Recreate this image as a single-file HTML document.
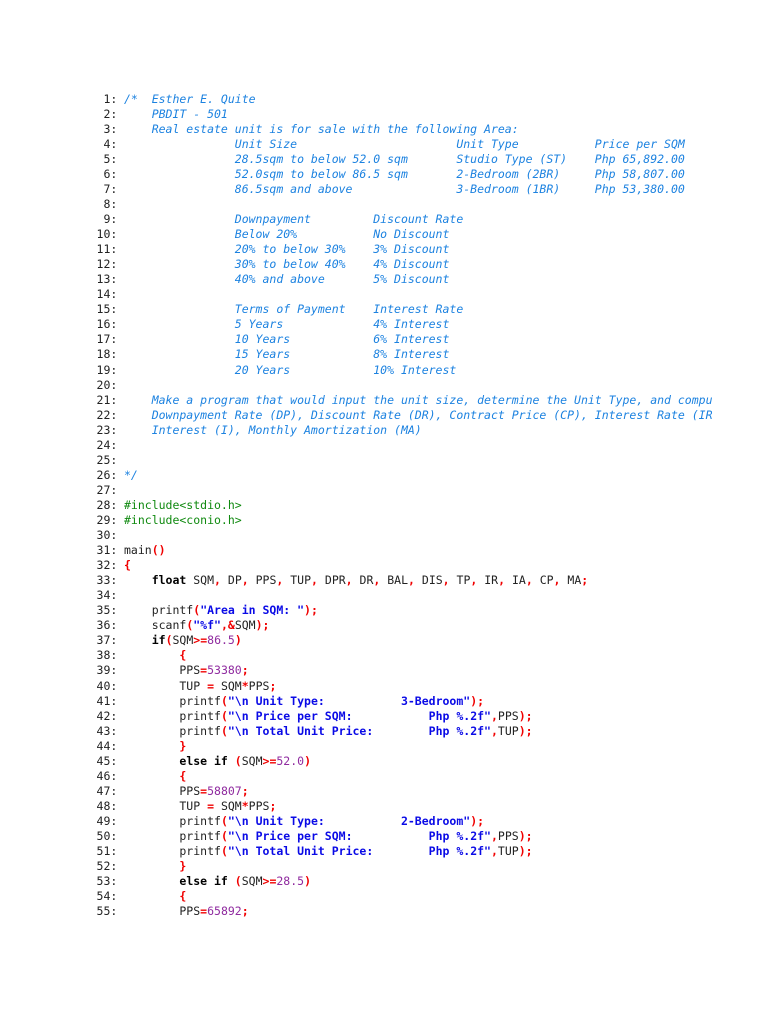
<!DOCTYPE html>
<html>
<head>
<meta charset="utf-8">
<style>
html,body{margin:0;padding:0;background:#fff;width:768px;height:1024px;overflow:hidden}
pre{margin:0;position:absolute;font-family:"DejaVu Sans Mono","Liberation Mono",monospace;font-size:11.5px;line-height:15.04px;color:#222;filter:blur(.25px)}
#n{left:96.3px;top:91.7px;width:21px;text-align:right}
#c{left:124px;top:91.7px;width:588px;height:840px;overflow:hidden}
i{color:#1c82e0}
b{color:#000}
.r{color:#f00000;font-weight:bold}
.s{color:#0a0ae6;font-weight:bold}
.p{color:#8f2a9f}
.g{color:#108a10}
</style>
</head>
<body>
<pre id="n"> 1:
 2:
 3:
 4:
 5:
 6:
 7:
 8:
 9:
10:
11:
12:
13:
14:
15:
16:
17:
18:
19:
20:
21:
22:
23:
24:
25:
26:
27:
28:
29:
30:
31:
32:
33:
34:
35:
36:
37:
38:
39:
40:
41:
42:
43:
44:
45:
46:
47:
48:
49:
50:
51:
52:
53:
54:
55:</pre>
<pre id="c"><i>/*  Esther E. Quite
    PBDIT - 501
    Real estate unit is for sale with the following Area:
                Unit Size                       Unit Type           Price per SQM
                28.5sqm to below 52.0 sqm       Studio Type (ST)    Php 65,892.00
                52.0sqm to below 86.5 sqm       2-Bedroom (2BR)     Php 58,807.00
                86.5sqm and above               3-Bedroom (1BR)     Php 53,380.00

                Downpayment         Discount Rate
                Below 20%           No Discount
                20% to below 30%    3% Discount
                30% to below 40%    4% Discount
                40% and above       5% Discount

                Terms of Payment    Interest Rate
                5 Years             4% Interest
                10 Years            6% Interest
                15 Years            8% Interest
                20 Years            10% Interest

    Make a program that would input the unit size, determine the Unit Type, and compu
    Downpayment Rate (DP), Discount Rate (DR), Contract Price (CP), Interest Rate (IR
    Interest (I), Monthly Amortization (MA)


*/</i>

<span class="g">#include&lt;stdio.h&gt;</span>
<span class="g">#include&lt;conio.h&gt;</span>

main<span class="r">()</span>
<span class="r">{</span>
    <b>float</b> SQM<span class="r">,</span> DP<span class="r">,</span> PPS<span class="r">,</span> TUP<span class="r">,</span> DPR<span class="r">,</span> DR<span class="r">,</span> BAL<span class="r">,</span> DIS<span class="r">,</span> TP<span class="r">,</span> IR<span class="r">,</span> IA<span class="r">,</span> CP<span class="r">,</span> MA<span class="r">;</span>

    printf<span class="r">(</span><span class="s">"Area in SQM: "</span><span class="r">);</span>
    scanf<span class="r">(</span><span class="s">"%f"</span><span class="r">,&amp;</span>SQM<span class="r">);</span>
    <b>if</b><span class="r">(</span>SQM<span class="r">&gt;=</span><span class="p">86.5</span><span class="r">)</span>
        <span class="r">{</span>
        PPS<span class="r">=</span><span class="p">53380</span><span class="r">;</span>
        TUP <span class="r">=</span> SQM<span class="r">*</span>PPS<span class="r">;</span>
        printf<span class="r">(</span><span class="s">"\n Unit Type:           3-Bedroom"</span><span class="r">);</span>
        printf<span class="r">(</span><span class="s">"\n Price per SQM:           Php %.2f"</span><span class="r">,</span>PPS<span class="r">);</span>
        printf<span class="r">(</span><span class="s">"\n Total Unit Price:        Php %.2f"</span><span class="r">,</span>TUP<span class="r">);</span>
        <span class="r">}</span>
        <b>else if</b> <span class="r">(</span>SQM<span class="r">&gt;=</span><span class="p">52.0</span><span class="r">)</span>
        <span class="r">{</span>
        PPS<span class="r">=</span><span class="p">58807</span><span class="r">;</span>
        TUP <span class="r">=</span> SQM<span class="r">*</span>PPS<span class="r">;</span>
        printf<span class="r">(</span><span class="s">"\n Unit Type:           2-Bedroom"</span><span class="r">);</span>
        printf<span class="r">(</span><span class="s">"\n Price per SQM:           Php %.2f"</span><span class="r">,</span>PPS<span class="r">);</span>
        printf<span class="r">(</span><span class="s">"\n Total Unit Price:        Php %.2f"</span><span class="r">,</span>TUP<span class="r">);</span>
        <span class="r">}</span>
        <b>else if</b> <span class="r">(</span>SQM<span class="r">&gt;=</span><span class="p">28.5</span><span class="r">)</span>
        <span class="r">{</span>
        PPS<span class="r">=</span><span class="p">65892</span><span class="r">;</span></pre>
</body>
</html>
